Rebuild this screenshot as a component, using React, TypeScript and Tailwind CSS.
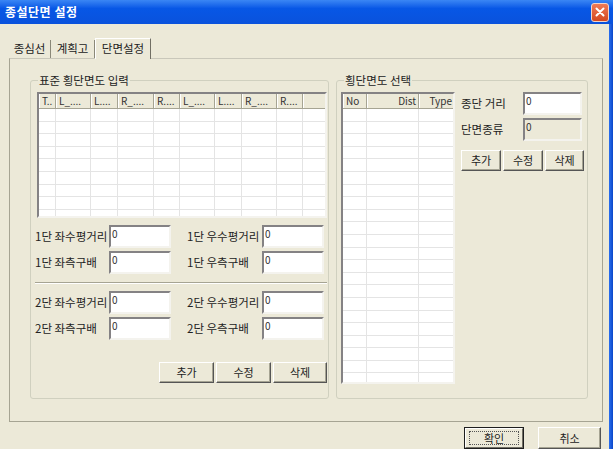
import React from "react";

const FONT = "font-['Noto_Sans_CJK_KR','Noto_Sans',sans-serif]";

type Col = { label: string; w: number; align?: "left" | "right" };

function Grid({
  cols,
  width,
  height,
  rows,
}: {
  cols: Col[];
  width: number;
  height: number;
  rows: number;
}) {
  return (
    <div
      className="shrink-0 flex flex-col overflow-hidden bg-white border-2 border-t-[#848284] border-l-[#848284] border-r-[#f4f3ee] border-b-[#f4f3ee]"
      style={{ width, height }}
    >
      {/* header */}
      <div className="flex h-[15px] shrink-0 bg-[#ece9d8] border-b border-[#a6a493]">
        {cols.map((c, i) => (
          <div
            key={i}
            className={
              "shrink-0 h-full border-r border-[#a6a493] border-l border-l-white px-[2px] text-[10px] leading-[14px] text-[#333] overflow-hidden whitespace-nowrap " +
              (c.align === "right" ? "text-right" : "text-left")
            }
            style={{ width: c.w }}
          >
            {c.label}
          </div>
        ))}
        <div className="flex-1 h-full border-l border-l-white" />
      </div>
      {/* body */}
      <div className="flex flex-col">
        {Array.from({ length: rows }).map((_, r) => (
          <div key={r} className="flex h-[12.6px] shrink-0 border-b border-[#e4e4e4]">
            {cols.map((c, i) => (
              <div
                key={i}
                className="shrink-0 h-full border-r border-[#e4e4e4]"
                style={{ width: c.w }}
              />
            ))}
            <div className="flex-1" />
          </div>
        ))}
      </div>
    </div>
  );
}

function Btn({
  children,
  w,
  h = 21,
  def = false,
}: {
  children: React.ReactNode;
  w: number;
  h?: number;
  def?: boolean;
}) {
  if (def) {
    return (
      <div
        className="border border-[#1e1e1e] flex items-stretch"
        style={{ width: w, height: h }}
      >
        <div className="flex-1 flex items-center justify-center bg-[#ece9d8] border border-t-white border-l-white border-r-[#716f64] border-b-[#716f64]">
          <div className="border border-dotted border-[#555] px-[14px] leading-[12px] text-[11px] text-[#222]">
            {children}
          </div>
        </div>
      </div>
    );
  }
  return (
    <div
      className="flex items-center justify-center bg-[#ece9d8] border border-t-white border-l-white border-r-[#555] border-b-[#555] shadow-[inset_-1px_-1px_0_#a6a493] text-[11px] text-[#222]"
      style={{ width: w, height: h }}
    >
      {children}
    </div>
  );
}

function Field({ w, disabled = false }: { w: number; disabled?: boolean }) {
  return (
    <div
      className={
        "h-[23px] border-2 border-t-[#848284] border-l-[#848284] border-r-[#f4f3ee] border-b-[#f4f3ee] pl-[1px] text-[10px] leading-[14px] text-[#333] " +
        (disabled ? "bg-[#ece9d8]" : "bg-white")
      }
      style={{ width: w }}
    >
      0
    </div>
  );
}

function Pair({ label, lw }: { label: string; lw: number }) {
  return (
    <div className="flex items-center">
      <div className="text-[11.5px] text-[#222] whitespace-nowrap" style={{ width: lw }}>
        {label}
      </div>
      <Field w={62} />
    </div>
  );
}

function FormRow({ left, right }: { left: string; right: string }) {
  return (
    <div className="flex">
      <div className="w-[152px]">
        <Pair label={left} lw={74} />
      </div>
      <Pair label={right} lw={75} />
    </div>
  );
}

export default function App() {
  const colsA: Col[] = [
    { label: "T..", w: 17 },
    { label: "L_....", w: 35 },
    { label: "L....", w: 27 },
    { label: "R_....", w: 36 },
    { label: "R....", w: 26 },
    { label: "L_....", w: 35 },
    { label: "L....", w: 27 },
    { label: "R_....", w: 35 },
    { label: "R....", w: 26 },
  ];
  const colsB: Col[] = [
    { label: "No", w: 24 },
    { label: "Dist", w: 52, align: "right" },
    { label: "Type", w: 36, align: "right" },
  ];

  return (
    <div className={`w-[613px] h-[449px] bg-[#ece9d8] flex flex-col overflow-hidden ${FONT} text-[#222]`}>
      {/* Title bar */}
      <div className="h-[24px] shrink-0 flex items-center justify-between pl-[5px] pr-[4px] bg-gradient-to-b from-[#3a86f4] via-[#0757e6] via-35% to-[#0a52dc]">
        <span className="text-white font-bold text-[12px] tracking-[0.5px]">종설단면 설정</span>
        <div className="w-[18px] h-[19px] rounded-[3px] border border-[#f2d4c8] bg-gradient-to-b from-[#ee7a55] to-[#d4481f] flex items-center justify-center">
          <svg width="10" height="10" viewBox="0 0 10 10">
            <path d="M1.5 1.5 L8.5 8.5 M8.5 1.5 L1.5 8.5" stroke="white" strokeWidth="2" strokeLinecap="round" />
          </svg>
        </div>
      </div>

      {/* Body */}
      <div className="flex-1 flex">
        <div className="flex-1 flex flex-col pl-[9px] pr-[6px] pt-[13px]">
          {/* Tabs */}
          <div className="flex items-end h-[21px] text-[11.5px]">
            <div className="w-[42px] h-[18px] flex items-center justify-center border-r border-[#8a8878]">종심선</div>
            <div className="w-[44px] h-[18px] flex items-center justify-center border-r border-[#8a8878]">계획고</div>
            <div className="w-[56px] h-[21px] mb-[-1px] relative z-10 flex items-center justify-center bg-[#ece9d8] border-t border-l border-white border-r border-r-[#716f64]">
              단면설정
            </div>
          </div>

          {/* Tab panel */}
          <div className="h-[364px] shrink-0 border border-[#a6a493] border-t-[#c9c7ba] pl-[20px] pt-[15px] flex gap-[7px]">
            {/* Group 1 */}
            <fieldset className="w-[299px] min-w-0 shrink-0 h-[325px] border border-[#d0d0bf] rounded-[3px] pl-[6px] pr-[1px] pt-[5px]">
              <legend className="ml-[1px] px-[1px] text-[11.5px] leading-[13px]">표준 횡단면도 입력</legend>
              <Grid cols={colsA} width={290} height={126} rows={9} />
              <div className="mt-[7px] flex flex-col gap-[3px] -ml-[2px]">
                <FormRow left="1단 좌수평거리" right="1단 우수평거리" />
                <FormRow left="1단 좌측구배" right="1단 우측구배" />
              </div>
              <div className="mt-[8px] h-[2px] border-t border-[#a6a493] border-b border-b-white -ml-[2px]" />
              <div className="mt-[7px] flex flex-col gap-[3px] -ml-[2px]">
                <FormRow left="2단 좌수평거리" right="2단 우수평거리" />
                <FormRow left="2단 좌측구배" right="2단 우측구배" />
              </div>
              <div className="mt-[22px] flex justify-end gap-[2px]">
                <Btn w={55}>추가</Btn>
                <Btn w={55}>수정</Btn>
                <Btn w={54}>삭제</Btn>
              </div>
            </fieldset>

            {/* Group 2 */}
            <fieldset className="w-[252px] min-w-0 shrink-0 h-[325px] border border-[#d0d0bf] rounded-[3px] px-[4px] pt-[5px]">
              <legend className="ml-[3px] px-[1px] text-[11.5px] leading-[13px]">횡단면도 선택</legend>
              <div className="flex">
                <Grid cols={colsB} width={114} height={292} rows={23} />
                <div className="ml-[6px] flex flex-col">
                  <div className="flex items-center">
                    <div className="w-[62px] text-[11.5px]">종단 거리</div>
                    <Field w={59} />
                  </div>
                  <div className="flex items-center mt-[3px]">
                    <div className="w-[62px] text-[11.5px]">단면종류</div>
                    <Field w={59} disabled />
                  </div>
                  <div className="mt-[9px] flex gap-[2px]">
                    <Btn w={40}>추가</Btn>
                    <Btn w={40}>수정</Btn>
                    <Btn w={39}>삭제</Btn>
                  </div>
                </div>
              </div>
            </fieldset>
          </div>

          {/* Bottom buttons */}
          <div className="mt-[5px] flex justify-end gap-[14px] pr-[2px]">
            <Btn w={60} h={22} def>
              확인
            </Btn>
            <Btn w={63} h={22}>
              취소
            </Btn>
          </div>
        </div>
        <div className="w-[4px] bg-gradient-to-r from-[#2a6ff0] to-[#0a46c8]" />
      </div>
    </div>
  );
}
